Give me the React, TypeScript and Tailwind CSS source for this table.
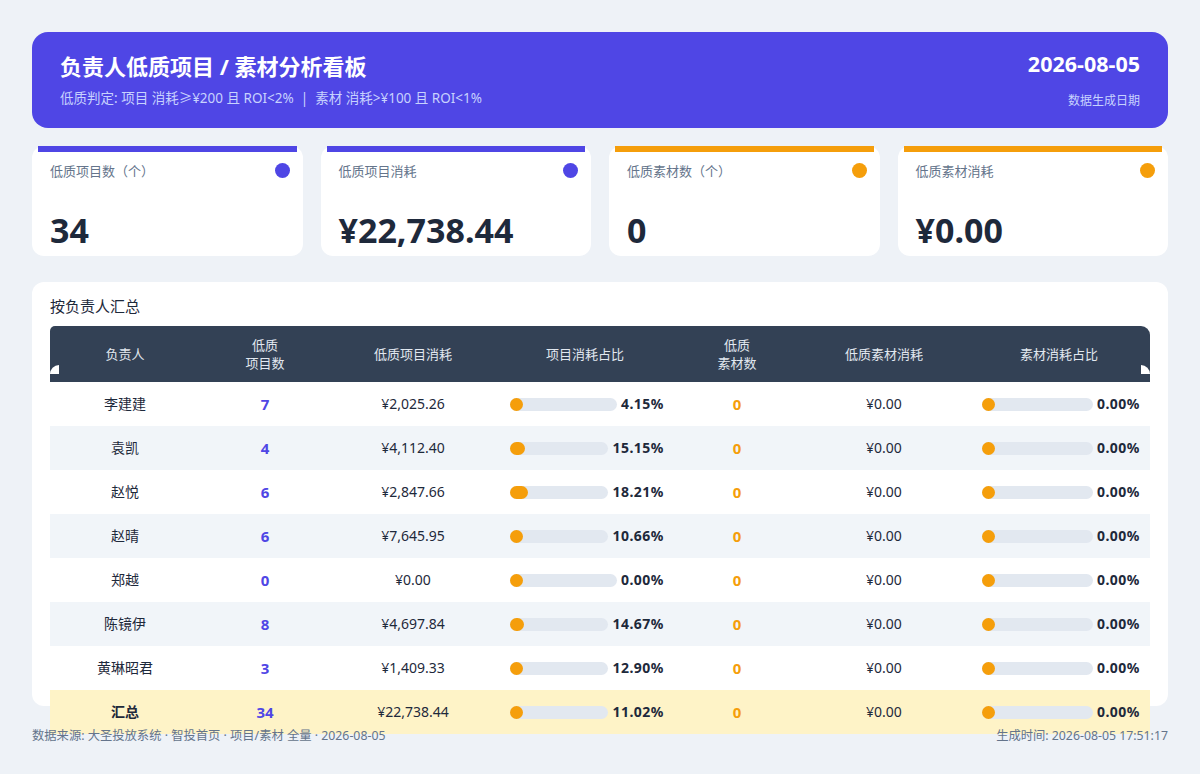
import React from "react";

type Row = {
  name: string;
  projCount: number;
  projCost: string;
  projPct: number;
  matCount: number;
  matCost: string;
  matPct: number;
};

const rows: Row[] = [
  { name: "李建建", projCount: 7, projCost: "¥2,025.26", projPct: 4.15, matCount: 0, matCost: "¥0.00", matPct: 0 },
  { name: "袁凯", projCount: 4, projCost: "¥4,112.40", projPct: 15.15, matCount: 0, matCost: "¥0.00", matPct: 0 },
  { name: "赵悦", projCount: 6, projCost: "¥2,847.66", projPct: 18.21, matCount: 0, matCost: "¥0.00", matPct: 0 },
  { name: "赵晴", projCount: 6, projCost: "¥7,645.95", projPct: 10.66, matCount: 0, matCost: "¥0.00", matPct: 0 },
  { name: "郑越", projCount: 0, projCost: "¥0.00", projPct: 0, matCount: 0, matCost: "¥0.00", matPct: 0 },
  { name: "陈镜伊", projCount: 8, projCost: "¥4,697.84", projPct: 14.67, matCount: 0, matCost: "¥0.00", matPct: 0 },
  { name: "黄琳昭君", projCount: 3, projCost: "¥1,409.33", projPct: 12.9, matCount: 0, matCost: "¥0.00", matPct: 0 },
];

const total: Row = {
  name: "汇总",
  projCount: 34,
  projCost: "¥22,738.44",
  projPct: 11.02,
  matCount: 0,
  matCost: "¥0.00",
  matPct: 0,
};

const stats = [
  { label: "低质项目数（个）", value: "34", bar: "bg-[#4f46e5]" },
  { label: "低质项目消耗", value: "¥22,738.44", bar: "bg-[#4f46e5]" },
  { label: "低质素材数（个）", value: "0", bar: "bg-[#f59e0b]" },
  { label: "低质素材消耗", value: "¥0.00", bar: "bg-[#f59e0b]" },
];

function Bar({ pct }: { pct: number }) {
  return (
    <div className="flex items-center gap-1">
      <div className="h-[13px] flex-1 rounded-full bg-[#e2e8f0]">
        <div
          className="h-[13px] min-w-[13px] rounded-full bg-[#f59e0b]"
          style={{ width: `${pct}%` }}
        />
      </div>
      <span className="text-sm font-bold text-[#1e293b] tracking-[0.5px]">
        {pct.toFixed(2)}%
      </span>
    </div>
  );
}

function TableRow({ r, cls, bold }: { r: Row; cls: string; bold?: boolean }) {
  return (
    <tr className={`h-[44px] ${cls}`}>
      <td className={`text-center text-sm text-[#1e293b] ${bold ? "font-bold" : ""}`}>{r.name}</td>
      <td className="text-center text-[15px] font-bold text-[#4f46e5]">{r.projCount}</td>
      <td className="text-center text-sm text-[#1e293b]">{r.projCost}</td>
      <td className="pl-[14px] pr-[10px]">
        <Bar pct={r.projPct} />
      </td>
      <td className="text-center text-[15px] font-bold text-[#f59e0b]">{r.matCount}</td>
      <td className="text-center text-sm text-[#1e293b]">{r.matCost}</td>
      <td className="pl-[14px] pr-[10px]">
        <Bar pct={r.matPct} />
      </td>
    </tr>
  );
}

export default function App() {
  return (
    <div
      className="flex h-[774px] w-full flex-col bg-[#eef2f7] px-8 pt-8 pb-[30px]"
      style={{ fontFamily: '"Noto Sans", "Noto Sans CJK SC", sans-serif' }}
    >
      {/* header */}
      <div className="flex h-[96px] shrink-0 items-start justify-between rounded-2xl bg-[#4f46e5] px-7 pt-[18px]">
        <div>
          <h1 className="text-[22px] font-bold leading-[32px] text-white">负责人低质项目 / 素材分析看板</h1>
          <p className="mt-[6px] text-[13.5px] text-[#c7d2fe]">
            低质判定: 项目 消耗≥¥200 且 ROI&lt;2% &nbsp;|&nbsp; 素材 消耗&gt;¥100 且 ROI&lt;1%
          </p>
        </div>
        <div className="text-right">
          <div className="text-[21.5px] font-bold leading-[28px] text-white">2026-08-05</div>
          <div className="mt-[15px] text-xs text-[#c7d2fe]">数据生成日期</div>
        </div>
      </div>

      {/* stat cards */}
      <div className="mt-[18px] grid shrink-0 grid-cols-4 gap-[18px]">
        {stats.map((s) => (
          <div key={s.label} className="h-[110px] rounded-xl bg-white">
            <div className={`mx-[6px] h-[6px] ${s.bar}`} />
            <div className="flex items-start justify-between pl-[18px] pr-[13px] pt-[10px]">
              <span className="text-[13px] text-[#64748b]">{s.label}</span>
              <span className={`mt-[1px] h-[15px] w-[15px] rounded-full ${s.bar}`} />
            </div>
            <div className="mt-[28px] pl-[18px] text-[34px] font-bold leading-[40px] text-[#1e293b]">
              {s.value}
            </div>
          </div>
        ))}
      </div>

      {/* summary table */}
      <div className="mt-[26px] min-h-0 flex-1 rounded-xl bg-white px-[18px] pt-[14px]">
        <h2 className="text-[15px] leading-[20px] text-[#1e293b]">按负责人汇总</h2>
        <table className="mt-[10px] w-full table-fixed border-collapse">
          <colgroup>
            <col className="w-[150px]" />
            <col className="w-[130px]" />
            <col className="w-[166px]" />
            <col className="w-[178px]" />
            <col className="w-[126px]" />
            <col className="w-[168px]" />
            <col />
          </colgroup>
          <thead>
            <tr className="h-[56px] text-[13px] leading-[18px] text-[#e2e8f0]">
              <th className="relative rounded-tl-[5px] bg-[#334155] font-normal">
                负责人
                <span className="absolute bottom-[8px] left-0 h-[9px] w-[9px] rounded-tl-full bg-white" />
              </th>
              <th className="bg-[#334155] font-normal">
                低质
                <br />
                项目数
              </th>
              <th className="bg-[#334155] font-normal">低质项目消耗</th>
              <th className="bg-[#334155] font-normal">项目消耗占比</th>
              <th className="bg-[#334155] font-normal">
                低质
                <br />
                素材数
              </th>
              <th className="bg-[#334155] font-normal">低质素材消耗</th>
              <th className="relative rounded-tr-[9px] bg-[#334155] font-normal">
                素材消耗占比
                <span className="absolute bottom-[8px] right-0 h-[9px] w-[9px] rounded-tr-full bg-white" />
              </th>
            </tr>
          </thead>
          <tbody>
            {rows.map((r, i) => (
              <TableRow key={r.name} r={r} cls={i % 2 === 1 ? "bg-[#f1f5f9]" : "bg-white"} />
            ))}
            <TableRow r={total} cls="bg-[#fef3c7]" bold />
          </tbody>
        </table>
      </div>

      {/* footer */}
      <div className="mt-[22px] flex h-4 shrink-0 items-center justify-between text-[12.3px] text-[#64748b]">
        <span>数据来源: 大圣投放系统 · 智投首页 · 项目/素材 全量 · 2026-08-05</span>
        <span>生成时间: 2026-08-05 17:51:17</span>
      </div>
    </div>
  );
}
